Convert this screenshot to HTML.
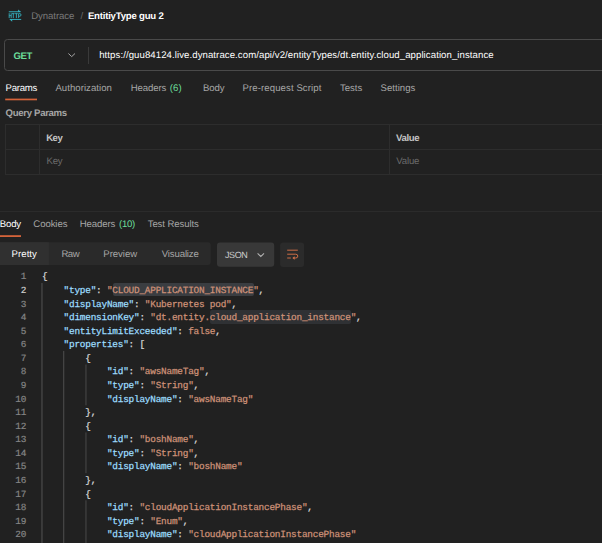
<!DOCTYPE html>
<html><head><meta charset="utf-8"><title>Postman</title>
<style>
html,body{margin:0;padding:0;background:#212121;}
body{width:602px;height:543px;position:relative;overflow:hidden;font-family:'Liberation Sans', sans-serif;}
.t{position:absolute;white-space:pre;line-height:1;font-family:'Liberation Sans', sans-serif;text-rendering:geometricPrecision;}
.b{position:absolute;box-sizing:border-box;}
.ln{-webkit-text-stroke:0.2px;position:absolute;left:0;width:26.1px;text-align:right;font-family:'Liberation Mono', monospace;font-size:9.4px;letter-spacing:-0.210px;text-rendering:geometricPrecision;line-height:13.58px;height:13.58px;white-space:pre;}
.cl{position:absolute;left:41.9px;font-family:'Liberation Mono', monospace;font-size:9.4px;letter-spacing:-0.210px;text-rendering:geometricPrecision;-webkit-text-stroke:0.25px;line-height:13.58px;height:13.58px;white-space:pre;color:#d4d4d4;}
.ig{position:absolute;width:1.6px;background:#434343;}
</style></head><body>
<!-- header icon -->
<svg class="b" style="left:0;top:0" width="30" height="30" viewBox="0 0 30 30">
 <g fill="none" stroke="#35b3c3" stroke-width="0.95">
  <path d="M8.8 11.75 H20.4"/>
  <path d="M9.9 19.45 H21.2"/>
 </g>
 <path d="M18.1 9.5 L21 11.9 L18.1 11.9 Z" fill="#35b3c3"/>
 <path d="M9.4 19.3 L12.2 19.3 L12.2 21.7 Z" fill="#35b3c3"/>
 <g fill="none" stroke="#35b3c3" stroke-width="0.85">
  <path d="M9.2 13.2 V18.1 M9.2 15.65 H11.2 M11.2 13.2 V18.1"/>
  <path d="M12 13.6 H14.6 M13.3 13.6 V18.1"/>
  <path d="M15.1 13.6 H17.7 M16.4 13.6 V18.1"/>
  <path d="M18.6 18.1 V13.6 H19.9 Q21 13.6 21 14.9 Q21 16.2 19.9 16.2 H18.6"/>
 </g>
</svg>
<!-- url bar -->
<div class="b" style="left:4px;top:39px;width:620px;height:32px;border:1px solid #4a4a4a;border-radius:3.5px;"></div>
<div class="b" style="left:88.3px;top:46.5px;width:1px;height:17px;background:#3a3a3a"></div>
<svg class="b" style="left:67px;top:51px" width="10" height="8" viewBox="0 0 10 8"><path d="M1.4 2.5 L4.7 5.6 L8 2.5" fill="none" stroke="#a6a6a6" stroke-width="1"/></svg>
<!-- params underline -->
<svg class="b" style="left:0;top:90px" width="60" height="20" viewBox="0 90 60 20"><rect x="5.2" y="98.6" width="31.8" height="1.7" fill="#d4633a"/></svg>
<!-- table -->
<div class="b" style="left:5px;top:124px;width:620px;height:51px;border:1px solid #2d2d2d;"></div>
<div class="b" style="left:5px;top:149px;width:620px;height:1px;background:#2d2d2d;"></div>
<div class="b" style="left:39px;top:124px;width:1px;height:51px;background:#2d2d2d;"></div>
<div class="b" style="left:389px;top:124px;width:1px;height:51px;background:#2d2d2d;"></div>
<!-- response divider -->
<div class="b" style="left:0;top:211px;width:602px;height:1px;background:#2b2b2b;"></div>
<svg class="b" style="left:0;top:230px" width="60" height="10" viewBox="0 230 60 10"><rect x="0" y="235.2" width="21" height="1.8" fill="#d4633a"/></svg>
<!-- pretty group -->
<svg class="b" style="left:0;top:240px" width="320" height="30" viewBox="0 240 320 30"><rect x="-4" y="242.3" width="214.7" height="22.7" rx="3" fill="#2a2a2a"/><rect x="-4" y="242.3" width="52.9" height="22.7" rx="2.5" fill="#303030"/><rect x="30" y="242.3" width="18.9" height="22.7" fill="#303030"/><rect x="217" y="242.4" width="57.2" height="24.3" rx="3" fill="#383838"/><rect x="280.1" y="242.5" width="24" height="24.5" rx="3" fill="#2b2b2b"/></svg>
<svg class="b" style="left:256px;top:250.5px" width="10" height="8" viewBox="0 0 10 8"><path d="M1.6 2.4 L4.8 5.5 L8 2.4" fill="none" stroke="#b4b4b4" stroke-width="1.05"/></svg>
<svg class="b" style="left:286px;top:248px" width="14" height="14" viewBox="0 0 14 14">
 <g fill="none" stroke="#d57248" stroke-width="0.95">
  <path d="M1.2 2.2 H11.8"/>
  <path d="M1.2 6.2 H9.6 Q11.8 6.2 11.8 8.1 Q11.8 10 9.6 10 H7.6"/>
  <path d="M1.2 10 H4.8"/>
 </g>
 <path d="M8.6 8.2 L6.4 10 L8.6 11.8 Z" fill="#d57248"/>
</svg>
<span class="t" style="left:31.20px;top:12.00px;font-size:9.6px;font-weight:400;color:#7a7a7a;letter-spacing:-0.059px">Dynatrace</span><span class="t" style="left:80.60px;top:12.00px;font-size:9.6px;font-weight:400;color:#6b6b6b;letter-spacing:0.000px">/</span><span class="t" style="left:87.90px;top:12.00px;font-size:9.6px;font-weight:700;color:#ffffff;letter-spacing:-0.209px">EntitiyType guu 2</span><span class="t" style="left:13.60px;top:52.00px;font-size:9.6px;font-weight:700;color:#6bdd9a;letter-spacing:-0.478px">GET</span><span class="t" style="left:99.20px;top:51.00px;font-size:9.6px;font-weight:400;color:#ffffff;letter-spacing:0.083px">https://guu84124.live.dynatrace.com/api/v2/entityTypes/dt.entity.cloud_application_instance</span><span class="t" style="left:5.60px;top:84.00px;font-size:9.6px;font-weight:400;color:#ffffff;letter-spacing:-0.294px">Params</span><span class="t" style="left:55.40px;top:84.00px;font-size:9.6px;font-weight:400;color:#a6a6a6;letter-spacing:0.046px">Authorization</span><span class="t" style="left:130.70px;top:84.00px;font-size:9.6px;font-weight:400;color:#a6a6a6;letter-spacing:-0.095px">Headers</span><span class="t" style="left:169.80px;top:84.00px;font-size:9.6px;font-weight:400;color:#6bdd9a;letter-spacing:0.089px">(6)</span><span class="t" style="left:203.00px;top:84.00px;font-size:9.6px;font-weight:400;color:#a6a6a6;letter-spacing:-0.144px">Body</span><span class="t" style="left:242.60px;top:84.00px;font-size:9.6px;font-weight:400;color:#a6a6a6;letter-spacing:0.083px">Pre-request Script</span><span class="t" style="left:340.00px;top:84.00px;font-size:9.6px;font-weight:400;color:#a6a6a6;letter-spacing:-0.041px">Tests</span><span class="t" style="left:380.50px;top:84.00px;font-size:9.6px;font-weight:400;color:#a6a6a6;letter-spacing:0.029px">Settings</span><span class="t" style="left:5.60px;top:109.00px;font-size:9.6px;font-weight:700;color:#a6a6a6;letter-spacing:-0.322px">Query Params</span><span class="t" style="left:46.20px;top:134.00px;font-size:9.6px;font-weight:700;color:#c4c4c4;letter-spacing:-0.536px">Key</span><span class="t" style="left:395.90px;top:134.00px;font-size:9.6px;font-weight:700;color:#c4c4c4;letter-spacing:-0.316px">Value</span><span class="t" style="left:46.60px;top:157.00px;font-size:9.6px;font-weight:400;color:#6b6b6b;letter-spacing:-0.316px">Key</span><span class="t" style="left:396.30px;top:157.00px;font-size:9.6px;font-weight:400;color:#6b6b6b;letter-spacing:-0.166px">Value</span><span class="t" style="left:-0.30px;top:220.00px;font-size:9.6px;font-weight:400;color:#ffffff;letter-spacing:-0.144px">Body</span><span class="t" style="left:33.30px;top:220.00px;font-size:9.6px;font-weight:400;color:#a6a6a6;letter-spacing:-0.082px">Cookies</span><span class="t" style="left:79.80px;top:220.00px;font-size:9.6px;font-weight:400;color:#a6a6a6;letter-spacing:-0.109px">Headers</span><span class="t" style="left:119.00px;top:220.00px;font-size:9.6px;font-weight:400;color:#6bdd9a;letter-spacing:-0.266px">(10)</span><span class="t" style="left:147.70px;top:220.00px;font-size:9.6px;font-weight:400;color:#a6a6a6;letter-spacing:-0.104px">Test Results</span><span class="t" style="left:11.60px;top:250.00px;font-size:9.6px;font-weight:400;color:#ffffff;letter-spacing:0.040px">Pretty</span><span class="t" style="left:61.40px;top:250.00px;font-size:9.6px;font-weight:400;color:#a6a6a6;letter-spacing:-0.468px">Raw</span><span class="t" style="left:103.30px;top:250.00px;font-size:9.6px;font-weight:400;color:#a6a6a6;letter-spacing:-0.046px">Preview</span><span class="t" style="left:161.80px;top:250.00px;font-size:9.6px;font-weight:400;color:#a6a6a6;letter-spacing:-0.148px">Visualize</span><span class="t" style="left:224.90px;top:251.00px;font-size:9.0px;font-weight:400;color:#cccccc;letter-spacing:-0.379px">JSON</span>
<div class="b" style="left:112.50px;top:283.33px;width:141.21px;height:13.08px;background:#3a3d41;border-radius:2px"></div><div class="b" style="left:210.26px;top:310.49px;width:141.21px;height:13.08px;background:#2f3134;border-radius:2px"></div>
<svg class="b" style="left:0;top:0" width="602" height="543" viewBox="0 0 602 543"><rect x="41.30" y="283.03" width="1.3" height="271.60" fill="#484848"/><rect x="63.00" y="350.93" width="1.3" height="203.70" fill="#444444"/><rect x="85.30" y="364.51" width="1.3" height="40.74" fill="#404040"/><rect x="85.30" y="432.41" width="1.3" height="40.74" fill="#404040"/><rect x="85.30" y="500.31" width="1.3" height="54.32" fill="#404040"/></svg>
<div class="ln" style="top:270.35px;color:#858585">1</div><div class="cl" style="top:270.35px">{</div><div class="ln" style="top:283.93px;color:#cfcfcf">2</div><div class="cl" style="top:283.93px">    <span style="color:#9cdcfe">&quot;type&quot;</span>: <span style="color:#ce9178">&quot;</span><span style="color:#ce9178">CLOUD_APPLICATION_INSTANCE</span><span style="color:#ce9178">&quot;</span>,</div><div class="ln" style="top:297.51px;color:#858585">3</div><div class="cl" style="top:297.51px">    <span style="color:#9cdcfe">&quot;displayName&quot;</span>: <span style="color:#ce9178">&quot;Kubernetes pod&quot;</span>,</div><div class="ln" style="top:311.09px;color:#858585">4</div><div class="cl" style="top:311.09px">    <span style="color:#9cdcfe">&quot;dimensionKey&quot;</span>: <span style="color:#ce9178">&quot;dt.entity.</span><span style="color:#ce9178">cloud_application_instance</span><span style="color:#ce9178">&quot;</span>,</div><div class="ln" style="top:324.67px;color:#858585">5</div><div class="cl" style="top:324.67px">    <span style="color:#9cdcfe">&quot;entityLimitExceeded&quot;</span>: <span style="color:#ce9178">false</span>,</div><div class="ln" style="top:338.25px;color:#858585">6</div><div class="cl" style="top:338.25px">    <span style="color:#9cdcfe">&quot;properties&quot;</span>: [</div><div class="ln" style="top:351.83px;color:#858585">7</div><div class="cl" style="top:351.83px">        {</div><div class="ln" style="top:365.41px;color:#858585">8</div><div class="cl" style="top:365.41px">            <span style="color:#9cdcfe">&quot;id&quot;</span>: <span style="color:#ce9178">&quot;awsNameTag&quot;</span>,</div><div class="ln" style="top:378.99px;color:#858585">9</div><div class="cl" style="top:378.99px">            <span style="color:#9cdcfe">&quot;type&quot;</span>: <span style="color:#ce9178">&quot;String&quot;</span>,</div><div class="ln" style="top:392.57px;color:#858585">10</div><div class="cl" style="top:392.57px">            <span style="color:#9cdcfe">&quot;displayName&quot;</span>: <span style="color:#ce9178">&quot;awsNameTag&quot;</span></div><div class="ln" style="top:406.15px;color:#858585">11</div><div class="cl" style="top:406.15px">        },</div><div class="ln" style="top:419.73px;color:#858585">12</div><div class="cl" style="top:419.73px">        {</div><div class="ln" style="top:433.31px;color:#858585">13</div><div class="cl" style="top:433.31px">            <span style="color:#9cdcfe">&quot;id&quot;</span>: <span style="color:#ce9178">&quot;boshName&quot;</span>,</div><div class="ln" style="top:446.89px;color:#858585">14</div><div class="cl" style="top:446.89px">            <span style="color:#9cdcfe">&quot;type&quot;</span>: <span style="color:#ce9178">&quot;String&quot;</span>,</div><div class="ln" style="top:460.47px;color:#858585">15</div><div class="cl" style="top:460.47px">            <span style="color:#9cdcfe">&quot;displayName&quot;</span>: <span style="color:#ce9178">&quot;boshName&quot;</span></div><div class="ln" style="top:474.05px;color:#858585">16</div><div class="cl" style="top:474.05px">        },</div><div class="ln" style="top:487.63px;color:#858585">17</div><div class="cl" style="top:487.63px">        {</div><div class="ln" style="top:501.21px;color:#858585">18</div><div class="cl" style="top:501.21px">            <span style="color:#9cdcfe">&quot;id&quot;</span>: <span style="color:#ce9178">&quot;cloudApplicationInstancePhase&quot;</span>,</div><div class="ln" style="top:514.79px;color:#858585">19</div><div class="cl" style="top:514.79px">            <span style="color:#9cdcfe">&quot;type&quot;</span>: <span style="color:#ce9178">&quot;Enum&quot;</span>,</div><div class="ln" style="top:528.37px;color:#858585">20</div><div class="cl" style="top:528.37px">            <span style="color:#9cdcfe">&quot;displayName&quot;</span>: <span style="color:#ce9178">&quot;cloudApplicationInstancePhase&quot;</span></div>
</body></html>
